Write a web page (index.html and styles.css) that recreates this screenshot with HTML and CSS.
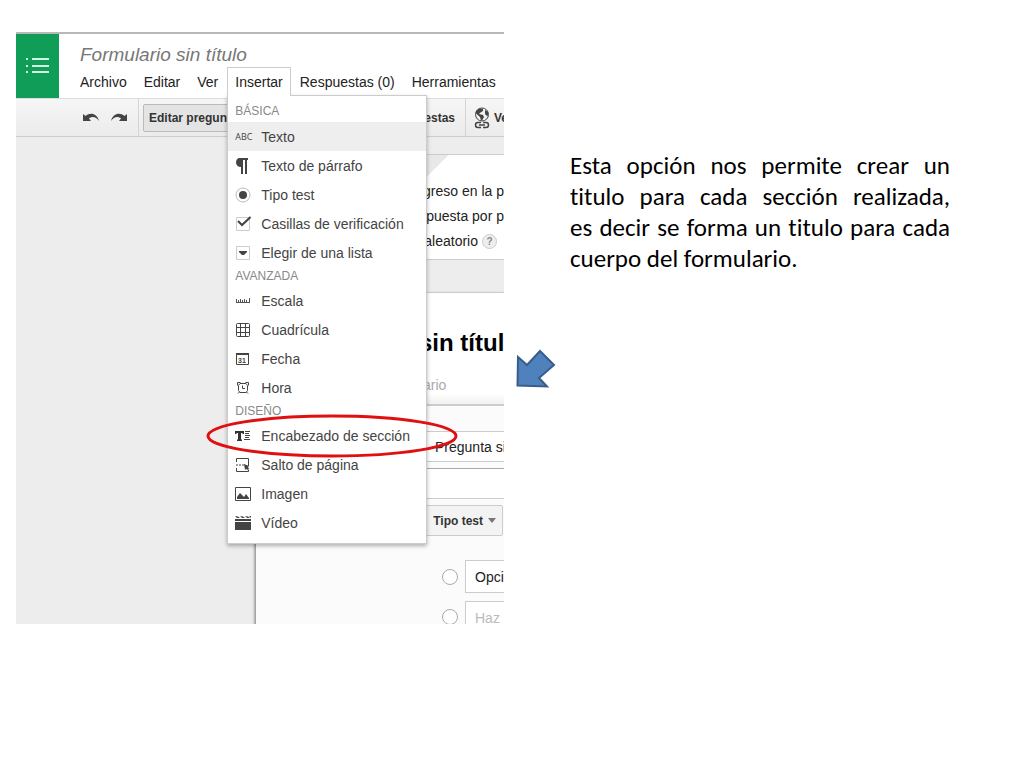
FILE: index.html
```
<!DOCTYPE html>
<html lang="es">
<head>
	<title>Formulario sin título</title>
	<meta charset="utf-8">
	<meta name="viewport" content="width=device-width,initial-scale=1.0">
	<link rel="stylesheet" href="styles.css">
</head>
<body>
<main class="slide">
	<section class="shot">
		<header class="header">
			<a class="logo" href="#" aria-label="Formularios">
				<svg width="24" height="18" viewBox="0 0 24 18" fill="#d5f5e4">
					<path d="M0 1h2v2H0zM0 8h2v2H0zM0 14h2v2H0zM6 1h17v2H6zM6 8h17v2H6zM6 14h17v2H6z"/>
				</svg>
			</a>
			<div class="heading">
				<h1 class="doc-title">Formulario sin título</h1>
				<ul class="menubar">
					<li><a href="#">Archivo</a></li>
					<li><a href="#">Editar</a></li>
					<li><a href="#">Ver</a></li>
					<li class="open">
						<a href="#">Insertar</a>
						<!-- menu Insertar -->
						<div class="menu">
							<h2>BÁSICA</h2>
							<ul>
								<li><a class="active" href="#"><span class="abc">ABC</span>Texto</a></li>
								<li><a href="#">
									<svg width="16" height="16" viewBox="0 0 16 16"><path fill="#444" d="M4.500 0H13v2h-1v14h-2V2H8v14H6V9C3 9 1 7 1 4.500S2.500 0 4.500 0z"/></svg>Texto de párrafo</a></li>
								<li><a href="#">
									<svg width="16" height="16" viewBox="0 0 16 16"><circle cx="8" cy="8" r="7" fill="#fff" stroke="#bbb"/><circle cx="8" cy="8" r="4" fill="#444"/></svg>Tipo test</a></li>
								<li><a href="#">
									<svg width="16" height="16" viewBox="0 0 16 16"><path fill="none" stroke="#ccc" d="M1.500 1.500h13v13h-13z"/><path fill="none" stroke="#444" stroke-width="2" d="M3 5l4 4 8.500-8"/></svg>Casillas de verificación</a></li>
								<li><a href="#">
									<svg width="16" height="16" viewBox="0 0 16 16"><path fill="none" stroke="#ccc" d="M1.500 1.500h13v13h-13z"/><path fill="#444" d="M4 6h8v1l-3 3H7L4 7z"/></svg>Elegir de una lista</a></li>
							</ul>
							<h2>AVANZADA</h2>
							<ul>
								<li><a href="#">
									<svg width="16" height="16" viewBox="0 0 16 16"><path fill="none" stroke="#555" d="M1 9.500h14M1.500 6v4M3.500 7v3M5.500 6v4M7.500 7v3M9.500 6v4M11.500 7v3M14.500 5v5"/></svg>Escala</a></li>
								<li><a href="#">
									<svg width="16" height="16" viewBox="0 0 16 16"><rect x="1.500" y="1.500" width="13" height="13" rx="1" fill="none" stroke="#444"/><path fill="none" stroke="#444" d="M5.500 1v14M10.500 1v14M1 5.500h14M1 10.500h14"/></svg>Cuadrícula</a></li>
								<li><a href="#">
									<svg width="16" height="16" viewBox="0 0 16 16"><path fill="none" stroke="#444" d="M1.500 2.500h12v11h-12z"/><path fill="#444" d="M1 2h13v2H1z"/><text x="7" y="12" class="day">31</text></svg>Fecha</a></li>
								<li><a href="#">
									<svg width="16" height="16" viewBox="0 0 16 16" fill="none" stroke="#444"><path d="M5 3.500h6l1.500 2v5l-1.500 2H5l-1.500-2v-5zM2.500 5.500v-3h3M10.500 2.500h3v3M4.500 12L3 13.500M11.500 12l1.500 1.500"/><path d="M7.500 5.500v3H10"/></svg>Hora</a></li>
							</ul>
							<h2>DISEÑO</h2>
							<ul>
								<li class="marked"><a href="#">
									<svg width="16" height="16" viewBox="0 0 16 16"><path fill="#333" d="M0 3h9v3H8L7 5H6v6l1 1v1H2v-1l1-1V5H2L1 6H0z"/><path stroke="#444" d="M10 3.500h5M10 5.500h4M10 7.500h5M10 9.500h4M9 11.500h6"/></svg>Encabezado de sección</a>
									<svg class="ring" width="252" height="44" viewBox="0 0 252 44"><ellipse cx="126" cy="22" rx="124" ry="20" fill="none" stroke="#e01010" stroke-width="3"/></svg>
								</li>
								<li><a href="#">
									<svg width="16" height="16" viewBox="0 0 16 16" fill="none" stroke="#444"><path d="M1.500 5V1.500h12V9M1.500 11v3.500h12V13"/><path stroke-dasharray="2 1" d="M1 8h8"/><path fill="#444" stroke="none" d="M9 7l5 2-1 1 1 2-1 1-2-1-1 1z"/></svg>Salto de página</a></li>
								<li><a href="#">
									<svg width="16" height="16" viewBox="0 0 16 16"><path fill="none" stroke="#444" d="M.5 1.500h15v13H.5z"/><path fill="#444" d="M2 13v-2l3-4 4 4 2-3 3 4v1z"/></svg>Imagen</a></li>
								<li><a href="#">
									<svg width="16" height="16" viewBox="0 0 16 16" fill="#444"><path d="M0 7h16v8H0zM0 4h16v2H0z"/><path d="M0 1l3 .5L5 3H2zM5 1l3 .5L10 3H7zM10 1l3 .5L15 3h-3zM14 1h2v2z"/></svg>Vídeo</a></li>
							</ul>
						</div>
					</li>
					<li><a href="#">Respuestas (0)</a></li>
					<li><a href="#">Herramientas</a></li>
				</ul>
			</div>
		</header>

		<div class="toolbar">
			<div class="history">
				<button type="button" aria-label="Deshacer">
					<svg width="18" height="12" viewBox="0 0 18 12"><path fill="#444" d="M1 2l2.500 2C8 0 15 1 17 9c-3-4.500-7-5-10-2.500L9 9H1z"/></svg>
				</button>
				<button type="button" aria-label="Rehacer">
					<svg width="18" height="12" viewBox="0 0 18 12"><path fill="#444" d="M17 2l-2.500 2C10 0 3 1 1 9c3-4.500 7-5 10-2.500L9 9h8z"/></svg>
				</button>
			</div>
			<button type="button" class="pressed">Editar pregunt</button>
			<button type="button" class="answers">estas</button>
			<button type="button" class="live">
				<svg width="16" height="22" viewBox="0 0 16 22" fill="none" stroke="#444">
					<circle cx="8" cy="7.500" r="6.500"/>
					<path fill="#444" stroke="none" d="M2 4l3-2.500 4 .5v2L6.500 5.500 5 7l4 1 1 2-2 3.500H7L6 10 2 6.500zM11 3l3 2v4l-2.500-1L11 6z"/>
					<path stroke-width="1.500" d="M7 15.500H4a2.500 2.500 0 0 0 0 5h3M9 15.500h3a2.500 2.500 0 0 1 0 5H9M5 18h6"/>
				</svg>Ve</button>
		</div>

		<!-- formulario debajo del menu -->
		<div class="canvas">
			<div class="card settings">
				<p>greso en la p</p>
				<p>puesta por p</p>
				<p class="random">aleatorio <button type="button" class="help">?</button></p>
			</div>
			<form class="page">
				<div class="card intro">
					<h2>sin títul</h2>
					<p>ario</p>
				</div>
				<div class="question">
					<input class="field" type="text" value="Pregunta si" aria-label="Título de la pregunta">
					<input class="field help-text" type="text" aria-label="Texto de ayuda">
					<button type="button" class="type">Tipo test<span class="caret"></span></button>
					<div class="option">
						<input type="radio" name="opcion" aria-label="Opción 1">
						<input class="field" type="text" value="Opci" aria-label="Texto de la opción 1">
					</div>
					<div class="option">
						<input type="radio" name="opcion" aria-label="Nueva opción">
						<input class="field" type="text" placeholder="Haz" aria-label="Texto de la nueva opción">
					</div>
				</div>
			</form>
		</div>
	</section>

	<svg class="arrow" width="40" height="40" viewBox="0 0 40 40">
		<path d="M2 8l9 8L24 2l14 14-15 13 8 8.500L1.500 36.500z" fill="#4f81bd" stroke="#385d8a" stroke-width="2"/>
	</svg>

	<p class="note">Esta opción nos permite crear un titulo para cada sección realizada, es&nbsp;decir se forma un titulo para cada cuerpo del formulario.</p>
</main>
</body>
</html>
```
FILE: styles.css
```
* {
	box-sizing: border-box;
}
body {
	margin: 0;
	background-color: #fff;
	font: 14px "Liberation Sans", Arial, sans-serif;
	color: #222;
}
h1, h2, p, ul {
	margin: 0;
	padding: 0;
}
ul {
	list-style: none;
}
a {
	color: inherit;
	text-decoration: none;
}
button, input {
	font: inherit;
	color: inherit;
	margin: 0;
}
svg {
	display: block;
	flex-shrink: 0;
}
.slide {
	display: grid;
	grid-template-columns: 488fr 42px 380fr;
	gap: 12px;
	align-items: start;
	padding: 32px 74px 32px 16px;
}
.shot {
	min-width: 0;
	overflow: hidden;
	border-top: 2px solid #b8b8b8;
}

/* header */
.header {
	display: flex;
	height: 64px;
}
.logo {
	display: flex;
	flex-shrink: 0;
	align-items: center;
	justify-content: center;
	width: 43px;
	background-color: #109d58;
}
.heading {
	padding: 9px 0 0 13px;
}
.doc-title {
	padding-left: 8px;
	font-size: 19px;
	font-style: italic;
	font-weight: normal;
	line-height: 24px;
	color: #777;
}
.menubar {
	display: flex;
	gap: 1px;
	white-space: nowrap;
}
.menubar > li {
	position: relative;
}
.menubar > li > a {
	display: block;
	padding: 0 7px;
	border: 1px solid transparent;
	border-bottom: 0;
	line-height: 28px;
}
.menubar > .open > a {
	position: relative;
	z-index: 3;
	border-color: #ccc;
	background-color: #fff;
}

/* menu */
.menu {
	position: absolute;
	top: 28px;
	left: 0;
	z-index: 2;
	width: 200px;
	padding: 4px 0 6px;
	border: 1px solid #ccc;
	background-color: #fff;
	box-shadow: 0 2px 4px rgba(0, 0, 0, .3);
}
.menu h2 {
	padding-left: 7px;
	font-size: 12px;
	font-weight: normal;
	line-height: 19px;
	color: #888;
}
.menu h2:first-child {
	line-height: 22px;
}
.menu li a {
	display: flex;
	align-items: center;
	gap: 10px;
	height: 29px;
	padding-left: 7px;
	color: #444;
}
.menu li .active {
	background-color: #eee;
}
.abc {
	width: 16px;
	font: 9px "Open Sans", sans-serif;
}
.day {
	font: bold 7px "Liberation Sans", sans-serif;
	text-anchor: middle;
	fill: #444;
}
.marked {
	position: relative;
}
.ring {
	position: absolute;
	top: -7px;
	left: -22px;
	pointer-events: none;
}

/* toolbar */
.toolbar {
	display: flex;
	align-items: center;
	height: 39px;
	border-top: 1px solid #ddd;
	border-bottom: 1px solid #ccc;
	background-image: linear-gradient(#f6f6f6, #ebebeb);
	font-size: 12px;
	font-weight: bold;
	color: #333;
}
.toolbar button {
	flex-shrink: 0;
	padding: 0;
	border: 0;
	background: none;
	white-space: nowrap;
}
.history {
	display: flex;
	flex-shrink: 0;
	align-self: stretch;
	align-items: center;
	gap: 10px;
	width: 123px;
	padding-left: 66px;
	border-right: 1px solid #d5d5d5;
}
.toolbar .pressed {
	width: 150px;
	height: 28px;
	margin-left: 4px;
	padding-left: 5px;
	border: 1px solid #bbb;
	border-radius: 2px;
	background-color: #e4e4e4;
	text-align: left;
}
.toolbar .answers {
	align-self: stretch;
	width: 173px;
	padding-right: 10px;
	border-right: 1px solid #d5d5d5;
	text-align: right;
}
.toolbar .live {
	display: flex;
	align-items: center;
	gap: 4px;
	padding-left: 8px;
}

/* form */
.canvas {
	padding: 17px 0 0 240px;
	background-color: #ededed;
	color: #222;
	white-space: nowrap;
}
.card {
	border-top: 1px solid #ccc;
	background-color: #fff;
}
.settings {
	height: 106px;
	padding-top: 24px;
	border-bottom: 1px solid #ccc;
	background-image: linear-gradient(135deg, #e8e8e8 136px, #fff 136px);
	line-height: 25px;
	text-align: right;
}
.random {
	display: flex;
	align-items: center;
	justify-content: flex-end;
	gap: 4px;
	padding-right: 7px;
}
.help {
	width: 15px;
	height: 15px;
	padding: 0;
	border: 1px solid #ccc;
	border-radius: 50%;
	background-color: #eee;
	font-size: 10px;
	font-weight: bold;
	line-height: 12px;
	color: #888;
}
.page {
	margin-top: 32px;
	box-shadow: -1px 2px 3px rgba(0, 0, 0, .5);
}
.intro {
	height: 112px;
	padding: 36px 0 0 163px;
	background-image: linear-gradient(#fff 90%, #f1f1f1);
}
.intro h2 {
	font-size: 24px;
	line-height: 28px;
	color: #000;
}
.intro p {
	padding: 18px 0 0 4px;
	line-height: 20px;
	color: #aaa;
}
.question {
	padding: 25px 0 0 32px;
	border-top: 2px solid #ccc;
	background-color: #fbfbfb;
}
.field {
	display: block;
	width: 100%;
	height: 31px;
	padding: 0 0 0 146px;
	border: 1px solid #ccc;
	border-right: 0;
	background-color: #fff;
}
.help-text {
	margin-top: 6px;
	border-top-color: #aaa;
}
.type {
	display: flex;
	align-items: center;
	justify-content: flex-end;
	gap: 5px;
	width: 215px;
	height: 31px;
	margin: 6px 0 24px;
	padding: 0 6px 0 0;
	border: 1px solid #ccc;
	border-radius: 2px;
	background-color: #f3f3f3;
	font-size: 12px;
	font-weight: bold;
	color: #333;
}
.caret {
	border: 4px solid transparent;
	border-top: 5px solid #777;
	border-bottom: 0;
}
.option {
	display: flex;
	align-items: center;
	gap: 7px;
	padding-left: 154px;
}
.option input[type=radio] {
	flex-shrink: 0;
	width: 16px;
	height: 16px;
	border: 1px solid #aaa;
	border-radius: 50%;
	background-color: #fff;
	appearance: none;
}
.option .field {
	min-width: 0;
	height: 33px;
	padding-left: 9px;
}
.option + .option {
	align-items: flex-start;
	height: 23px;
	margin-top: 8px;
	overflow: hidden;
}
.option + .option input[type=radio] {
	margin-top: 8px;
}
.field::placeholder {
	color: #bbb;
}

/* side */
.arrow {
	margin-top: 317px;
}
.note {
	padding-top: 118px;
	font-family: Carlito, Lato, sans-serif;
	font-size: 25px;
	font-variant-ligatures: none;
	line-height: 31px;
	color: #000;
	text-align: justify;
}
```
